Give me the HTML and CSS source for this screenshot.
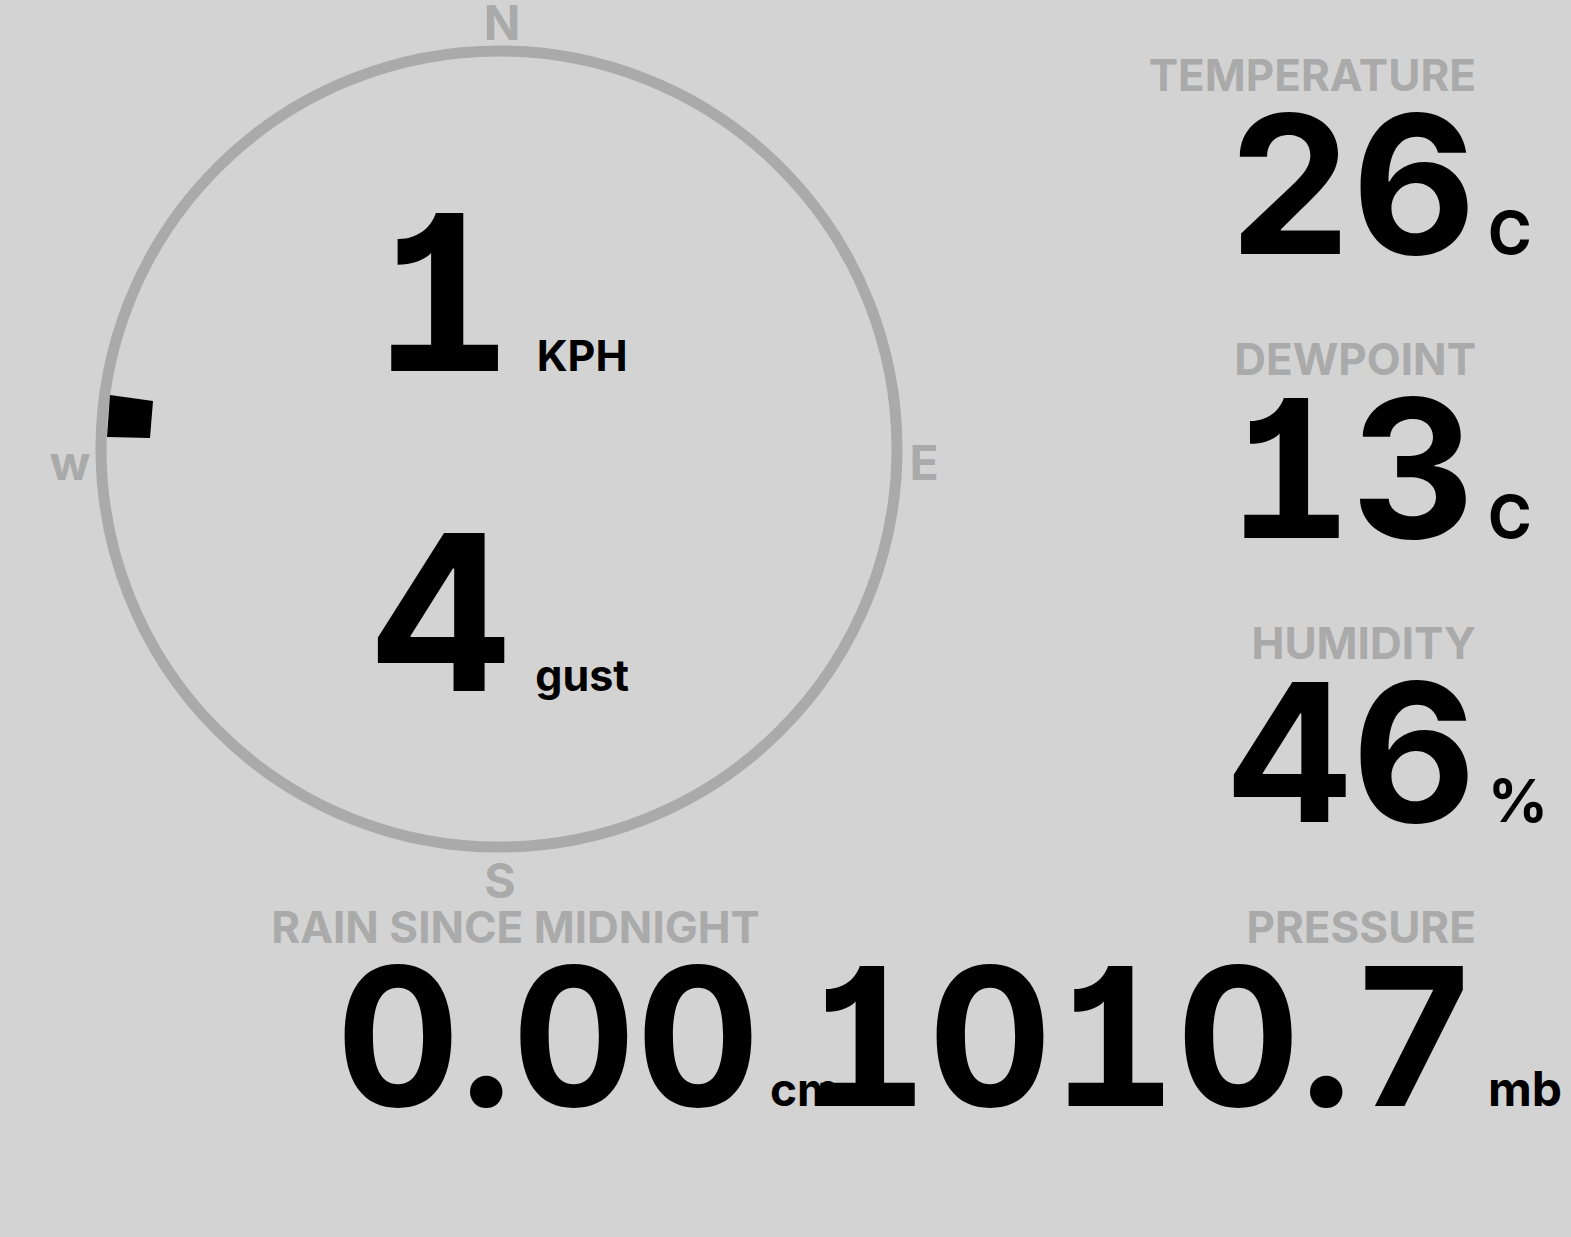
FILE: index.html
```html
<!DOCTYPE html>
<html lang="en">
<head>
  <meta charset="UTF-8">
  <meta name="viewport" content="width=device-width, initial-scale=1.0">
  <title>Weather Station</title>
  <link rel="stylesheet" href="styles.css">
</head>
<body>
  <main class="board">
    <!-- Vento e chuva -->
    <section class="left">
      <div class="compass">
        <svg class="dial" width="1000" height="904" viewBox="0 0 1000 904">
          <circle class="ring" cx="499" cy="449" r="398" />
          <text class="point" x="502" y="40">N</text>
          <text class="point" x="924" y="480">E</text>
          <text class="point" x="500" y="898">S</text>
          <text class="point" x="70" y="480">w</text>
          <polygon class="vane" points="110,395 153,401 150,438 107,437" />
        </svg>
        <div class="wind">
          <div class="wind-row">
            <span class="wind-num">1</span>
            <span class="wind-unit">KPH</span>
          </div>
          <div class="wind-row">
            <span class="wind-num">4</span>
            <span class="wind-unit">gust</span>
          </div>
        </div>
      </div>

      <div class="stat stat-rain">
        <div class="label">RAIN SINCE MIDNIGHT</div>
        <div class="value"><span class="num">0.00</span><span class="unit unit-sm">cm</span></div>
      </div>
    </section>

    <!-- Leituras -->
    <section class="right">
      <div class="stat">
        <div class="label">TEMPERATURE</div>
        <div class="value"><span class="num">26</span><span class="unit">C</span></div>
      </div>
      <div class="stat">
        <div class="label">DEWPOINT</div>
        <div class="value"><span class="num">13</span><span class="unit">C</span></div>
      </div>
      <div class="stat">
        <div class="label">HUMIDITY</div>
        <div class="value"><span class="num">46</span><span class="unit">%</span></div>
      </div>
      <div class="stat">
        <div class="label">PRESSURE</div>
        <div class="value"><span class="num">1010.7</span><span class="unit unit-sm">mb</span></div>
      </div>
    </section>
  </main>
</body>
</html>
```

FILE: styles.css
```css
/* Reset básico */
* {
  margin: 0;
  padding: 0;
  box-sizing: border-box;
}

body {
  font-family: Inter, "Noto Sans", sans-serif;
  font-weight: 700;
  background-color: #d3d3d3;
  color: #000;
}

.board {
  display: flex;
  height: 1237px;
  overflow: hidden;
}

/* Coluna esquerda */
.left {
  width: 1000px;
  flex: none;
  display: flex;
  flex-direction: column;
}

.compass {
  display: grid;
}

.dial,
.wind {
  grid-area: 1 / 1;
}

.dial {
  overflow: visible;
}

.ring {
  fill: none;
  stroke: #aaa;
  stroke-width: 11;
}

.point {
  font-family: Inter, "Noto Sans", sans-serif;
  font-weight: 700;
  font-size: 48px;
  fill: #aaa;
  text-anchor: middle;
}

.vane {
  fill: #000;
}

.wind {
  display: flex;
  flex-direction: column;
  align-items: center;
  justify-content: center;
  gap: 103px;
}

.wind-row {
  display: flex;
  align-items: baseline;
  gap: 24px;
}

.wind-num {
  font-size: 217px;
  line-height: 217px;
  font-feature-settings: "tnum" 1, "cv01" 1;
}

.wind-unit {
  font-size: 43px;
  line-height: 1;
}

/* Coluna direita */
.right {
  flex: 1;
  min-width: 0;
  display: flex;
  flex-direction: column;
  padding: 52px 15px 0 0;
}

.stat {
  height: 284px;
  display: flex;
  flex-direction: column;
  align-items: flex-end;
}

.stat-rain {
  width: 836px;
}

.label {
  font-size: 44px;
  line-height: 47px;
  color: #aaa;
  margin-right: 80px;
  white-space: nowrap;
}

.stat-rain .label {
  margin-right: 76px;
}

.value {
  display: flex;
  align-items: baseline;
  white-space: nowrap;
}

.num {
  font-size: 192px;
  line-height: 170px;
  font-feature-settings: "tnum" 1, "cv01" 1;
}

.unit {
  width: 80px;
  flex: none;
  padding-left: 12px;
  font-size: 59px;
  line-height: 1;
}

.unit-sm {
  font-size: 48px;
}

.stat-rain .unit {
  width: 76px;
  padding-left: 10px;
  font-size: 46px;
}
```
